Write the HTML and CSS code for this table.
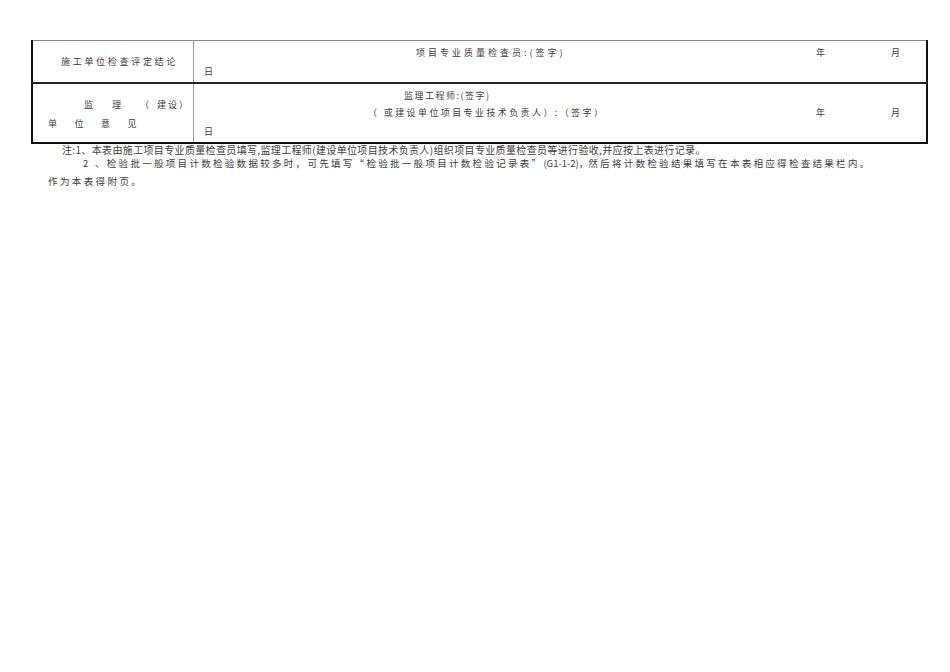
FILE: index.html
```html
<!DOCTYPE html>
<html lang="zh">
<head>
<meta charset="utf-8">
<title>检验批质量验收记录</title>
<link rel="stylesheet" href="styles.css">
</head>
<body>
<div class="page">
  <table class="form">
    <tr class="row-a">
      <td class="label"><div class="label-a">施工单位检查评定结论</div></td>
      <td class="content">
        <div class="line line-a">
          <div class="sig sig-a">项目专业质量检查员:(签字)</div>
          <span class="ym">年</span><span class="ym month">月</span>
        </div>
        <div class="day">日</div>
      </td>
    </tr>
    <tr class="row-b">
      <td class="label">
        <div class="label-b1"><span class="w">监</span><span class="w">理</span><span class="w w-paren">（</span>建设）</div>
        <div class="label-b2"><span class="w">单</span><span class="w">位</span><span class="w">意</span>见</div>
      </td>
      <td class="content">
        <div class="line line-b1">
          <div class="sig sig-b1">监理工程师:(签字)</div>
        </div>
        <div class="line line-b2">
          <div class="sig sig-b2">（ 或建设单位项目专业技术负责人）:（签字）</div>
          <span class="ym">年</span><span class="ym month">月</span>
        </div>
        <div class="day">日</div>
      </td>
    </tr>
  </table>
  <div class="notes">
    <p class="note note-1">注:1、本表由施工项目专业质量检查员填写,监理工程师(建设单位项目技术负责人)组织项目专业质量检查员等进行验收,并应按上表进行记录。</p>
    <p class="note note-2">2 、检验批一般项目计数检验数据较多时，可先填写“检验批一般项目计数检验记录表”<span class="tight">(G1-1-2)，</span>然后将计数检验结果填写在本表相应得检查结果栏内。</p>
    <p class="note note-3">作为本表得附页。</p>
  </div>
</div>
</body>
</html>
```
FILE: styles.css
```css
html, body {
  margin: 0;
  padding: 0;
  background: #ffffff;
}
body {
  font-family: "Noto Sans CJK SC", "Liberation Serif", serif;
  color: #3c3c3c;
}
.page {
  padding: 40px 0 0 31px;
  width: 898px;
}
.form {
  border-collapse: collapse;
  width: 897px;
  border-left: 2px solid #111;
  border-right: 2px solid #111;
  border-bottom: 2px solid #111;
  border-top: 1px solid #888;
  table-layout: fixed;
}
.form td {
  padding: 0;
  vertical-align: top;
  font-size: 9px;
  line-height: 12px;
  letter-spacing: 3px;
}
.form td.label {
  width: 160px;
  border-right: 1px solid #999;
}
.row-a td {
  height: 41px;
  border-bottom: 2px solid #222;
}
.row-b td {
  height: 58px;
}
.label-a {
  padding: 15px 0 0 28px;
  letter-spacing: 2.7px;
}
.label-b1 {
  padding: 15px 0 0 51px;
  letter-spacing: 2px;
  white-space: nowrap;
}
.label-b1 .w {
  display: inline-block;
  width: 28px;
  letter-spacing: 0;
}
.label-b1 .w-paren {
  width: 17px;
}
.label-b2 {
  padding: 7px 0 0 15px;
  white-space: nowrap;
}
.label-b2 .w {
  display: inline-block;
  width: 26.5px;
  letter-spacing: 0;
}
.content {
  position: relative;
}
.line {
  display: flex;
  align-items: center;
}
.sig {
  width: 622px;
  box-sizing: border-box;
  flex: none;
}
.line-a {
  padding-top: 6px;
}
.sig-a {
  padding-left: 222px;
}
.line-b1 {
  padding-top: 6px;
}
.sig-b1 {
  padding-left: 210px;
  letter-spacing: 1.5px;
}
.line-b2 {
  padding-top: 5px;
}
.sig-b2 {
  padding-left: 174px;
  letter-spacing: 2.4px;
}
.ym {
  flex: none;
  width: 75px;
}
.day {
  padding: 7px 0 0 10px;
}
.notes {
  font-size: 10px;
}
.note {
  margin: 0;
  white-space: nowrap;
}
.note-1 {
  padding: 0 0 0 31px;
  line-height: 13px;
  margin-top: -1px;
  letter-spacing: 0.35px;
}
.note-2 {
  padding: 1px 0 0 52px;
  line-height: 13px;
  font-size: 9.5px;
  letter-spacing: 2.3px;
}
.note-2 .tight {
  letter-spacing: 0;
}
.note-3 {
  padding: 5px 0 0 17px;
  line-height: 13px;
  font-size: 9.5px;
  letter-spacing: 2.4px;
}
```
